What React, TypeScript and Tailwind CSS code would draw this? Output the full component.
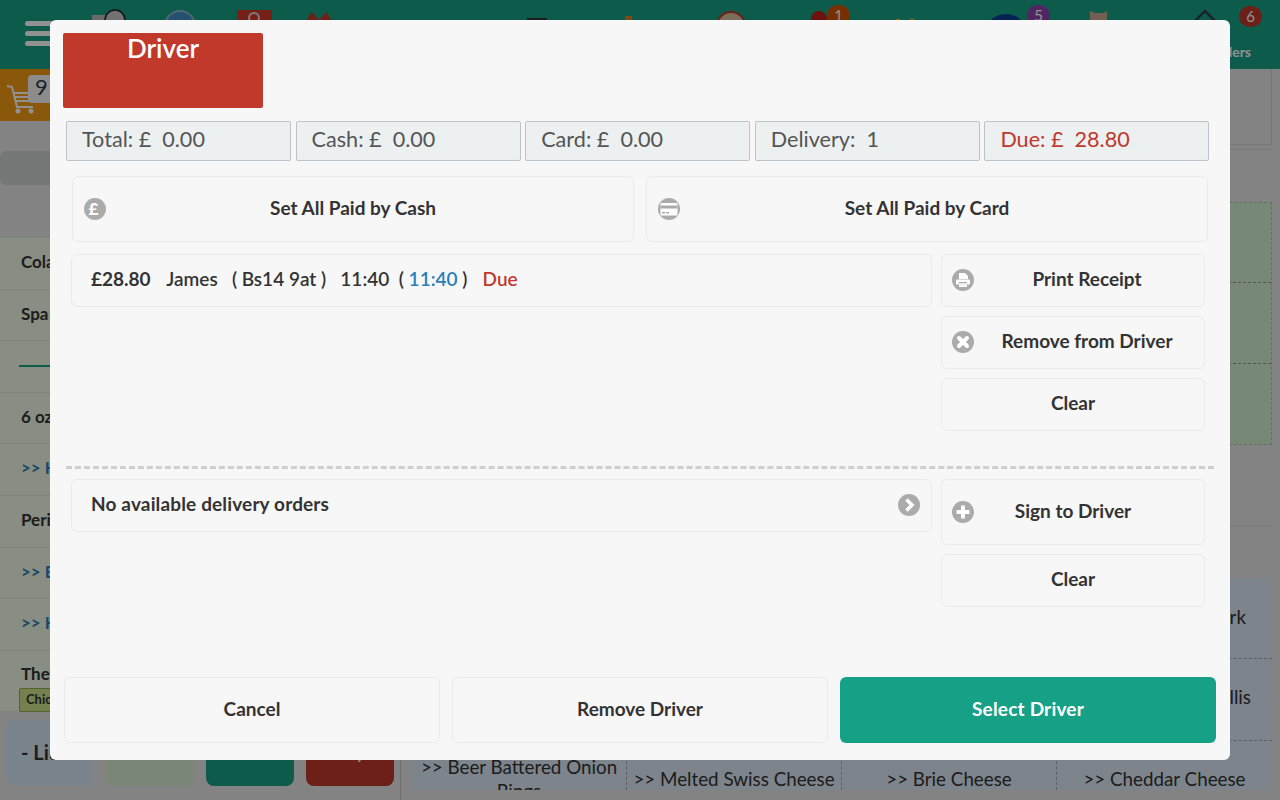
import React from "react";

const IconCircle = ({ children, className }: { children: React.ReactNode; className: string }) => (
  <svg viewBox="0 0 22 22" className={`absolute w-[22px] h-[22px] ${className}`}>
    <circle cx="11" cy="11" r="11" fill="#ababab" />
    {children}
  </svg>
);

const CardIcon = ({ className }: { className: string }) => (
  <IconCircle className={className}>
    <rect x="2.5" y="5" width="17" height="12.5" rx="1" fill="#fff" />
    <rect x="2.5" y="7.5" width="17" height="3" fill="#ababab" />
    <rect x="4" y="14" width="3" height="1.5" fill="#ababab" />
    <rect x="8" y="14" width="3" height="1.5" fill="#ababab" />
  </IconCircle>
);

const PrintIcon = ({ className }: { className: string }) => (
  <IconCircle className={className}>
    <path d="M7 4h6l3 3v3H7z" fill="#fff" />
    <rect x="4" y="10.5" width="14" height="5" rx="1" fill="#fff" />
    <rect x="7" y="13" width="8" height="1.2" fill="#ababab" />
    <rect x="7" y="15.5" width="8" height="2.5" fill="#fff" />
  </IconCircle>
);

const CloseIcon = ({ className }: { className: string }) => (
  <IconCircle className={className}>
    <path d="M7 7l8 8M15 7l-8 8" stroke="#fff" strokeWidth="4" strokeLinecap="round" />
  </IconCircle>
);

const PlusIcon = ({ className }: { className: string }) => (
  <IconCircle className={className}>
    <path d="M11 4.5v13M4.5 11h13" stroke="#fff" strokeWidth="4" />
  </IconCircle>
);

const ChevronIcon = ({ className }: { className: string }) => (
  <IconCircle className={className}>
    <path d="M8.5 5.5l5.5 5.5-5.5 5.5" stroke="#fff" strokeWidth="3.6" fill="none" />
  </IconCircle>
);

const Total = ({ children, red }: { children: React.ReactNode; red?: boolean }) => (
  <div
    className={`w-[225px] h-10 flex items-center pl-[15px] pb-[4px] bg-[#ecf0f1] border border-[#bdc3c7] rounded-[2px] text-[21.6px] whitespace-pre ${
      red ? "text-[#c0392b]" : "text-[#555]"
    }`}
  >
    {children}
  </div>
);

const Btn = ({
  children,
  className,
  icon,
}: {
  children?: React.ReactNode;
  className: string;
  icon?: React.ReactNode;
}) => (
  <div
    className={`relative flex items-center justify-center pb-[2px] border border-[#ebebeb] rounded-[6px] text-[19px] font-bold text-[#333] ${className}`}
  >
    {icon}
    {children}
  </div>
);

const listRows = ["Cola", "Spa", "", "6 oz", ">> H", "Peri", ">> B", ">> K"];

const NavIcons = () => (
  <svg viewBox="0 0 1280 69" className="absolute left-0 top-0 w-[1280px] h-[69px]">
    <rect x="92" y="15" width="14" height="8" fill="#bbb" />
    <circle cx="115" cy="20" r="10" fill="#c8c8c8" stroke="#222" strokeWidth="1.5" />
    <circle cx="180" cy="26" r="15" fill="#3f8fc4" stroke="#8fb8cc" strokeWidth="2" />
    <rect x="237" y="10" width="35" height="20" fill="#d0392b" />
    <circle cx="254" cy="18" r="5" fill="none" stroke="#ddd" strokeWidth="2" />
    <path d="M305 22l7-10 7 8 7-8 7 10v6h-28z" fill="#c0392b" />
    <rect x="527" y="18" width="20" height="6" fill="#333" />
    <rect x="625" y="16" width="7" height="8" fill="#e67e22" />
    <circle cx="731" cy="26" r="14" fill="#d8c4a0" stroke="#c0392b" strokeWidth="2" />
    <circle cx="819" cy="19" r="8" fill="#c0201b" />
    <circle cx="898" cy="21" r="2.5" fill="#e8b00c" />
    <circle cx="912" cy="21" r="2.5" fill="#e8b00c" />
    <ellipse cx="1006" cy="26" rx="17" ry="12" fill="#0a3d91" />
    <path d="M1090 11l5 2h9l3-2v14h-17z" fill="#c9a890" />
    <path d="M1192 24l13-13 13 13" fill="none" stroke="#2c3e50" strokeWidth="2.5" />
  </svg>
);

const Badge = ({ n, className }: { n: string; className: string }) => (
  <div
    className={`absolute w-[23px] h-[21px] rounded-full flex items-center justify-center text-white text-[15px] ${className}`}
  >
    {n}
  </div>
);

export default function App() {
  return (
    <div className="relative w-[1280px] h-[800px] overflow-hidden bg-[#e7e7e7] font-[Lato,sans-serif] text-[#2c3e50]">
      {/* page behind the dialog */}
      <header className="relative h-[69px] bg-[#16a085]">
        <div className="flex flex-col gap-[5px] pt-[21px] pl-[25px]">
          <div className="w-[30px] h-[5px] rounded-full bg-[#fff]" />
          <div className="w-[30px] h-[5px] rounded-full bg-[#fff]" />
          <div className="w-[30px] h-[5px] rounded-full bg-[#fff]" />
        </div>
        <NavIcons />
        <Badge n="1" className="left-[827px] top-[5px] bg-[#d35400]" />
        <Badge n="5" className="left-[1027px] top-[5px] bg-[#8e44ad]" />
        <Badge n="6" className="left-[1239px] top-[6px] bg-[#c0392b]" />
        <div className="absolute right-[29px] top-[41px] text-[14px] font-bold text-white">Orders</div>
      </header>

      <div className="flex h-[731px]">
        <aside className="w-[401px] shrink-0 border-r border-[#c4c4c4]">
          <div className="relative h-[52px] bg-[#f39c12]">
            <svg viewBox="0 0 32 30" className="absolute left-[6px] top-[15px] w-8 h-[30px]" fill="none" stroke="#fff" strokeWidth="2">
              <path d="M1 2l5 1 5 20h16" />
              <path d="M8 9h20M9 13h18M10 17h16" />
              <circle cx="12" cy="27" r="1.5" fill="#fff" />
              <circle cx="25" cy="27" r="1.5" fill="#fff" />
            </svg>
            <div className="absolute left-[28px] top-[6px] w-[30px] h-[28px] rounded-[4px] bg-[#f7f7f7] pl-[7px] text-[22px] leading-[24px]">
              9
            </div>
          </div>
          <div className="h-[30px]" />
          <div className="h-[34px] bg-[#d0d4d4] rounded-l-md" />
          <div className="h-[53px]" />
          {listRows.map((r, i) => (
            <div
              key={i}
              className={`h-[51.6px] flex items-center pl-[21px] pb-[3px] bg-[#f0f9e6] border-b border-[#dfe6d4] text-[17px] font-bold ${
                r.startsWith(">>") ? "text-[#2980b9]" : "text-[#333]"
              }`}
            >
              {r === "" ? <div className="w-full h-[2px] ml-[-2px] mt-[3px] bg-[#16a085]" /> : r}
            </div>
          ))}
          <div className="h-[60px] pl-[21px] pt-[12px] bg-[#f0f9e6] text-[17px] font-bold leading-[22px] text-[#333]">
            The
            <div className="ml-[-2px] mt-[3px] h-[24px] w-[80px] pl-[6px] bg-[#cde28a] border border-[#8fb04a] rounded-[2px] text-[13px] leading-[20px]">
              Chicken
            </div>
          </div>
          <div className="flex gap-3 pl-[6px] pt-[9px]">
            <div className="w-[88px] h-[66px] rounded-[8px] bg-[#d6e9f8] flex items-center pl-[15px] pb-[2px] text-[20px] font-bold text-[#333]">
              - Liu
            </div>
            <div className="w-[88px] h-[66px] rounded-[8px] bg-[#d8edcf]" />
            <div className="w-[88px] h-[66px] rounded-[8px] bg-[#16a085]" />
            <div className="w-[88px] h-[66px] rounded-[8px] bg-[#c0392b] flex items-center justify-center pb-[4px] text-[20px] text-white">
              Pay
            </div>
          </div>
        </aside>

        <main className="flex-1 flex flex-col pl-[11px] pr-2 text-[18.8px] text-[#333]">
          <div className="h-[76px] ml-auto w-[60px] border-r border-b border-[#cfcfcf]" />
          <div className="h-[5px] border-b border-[#d6d6d6]" />
          <div className="h-[52px]" />
          <div className="h-[243px] grid grid-rows-3 border border-dashed border-[#a9c9a9] bg-[#d4efd0]">
            <div className="border-b border-dashed border-[#a08f8f]" />
            <div className="border-b border-dashed border-[#a08f8f]" />
            <div />
          </div>
          <div className="h-[81px] border-b border-[#d6d6d6]" />
          <div className="h-[52px]" />
          <div className="h-[212px] grid grid-cols-4 grid-rows-[81px_82px_49px] bg-[#dde9f6] text-center">
            <div className="border-r border-b border-dashed border-[#a3a9b0]" />
            <div className="border-r border-b border-dashed border-[#a3a9b0]" />
            <div className="border-r border-b border-dashed border-[#a3a9b0]" />
            <div className="flex items-center justify-end pr-[26px] pb-[2px] border-b border-dashed border-[#a3a9b0]">Pork</div>
            <div className="border-r border-b border-dashed border-[#a3a9b0]" />
            <div className="border-r border-b border-dashed border-[#a3a9b0]" />
            <div className="border-r border-b border-dashed border-[#a3a9b0]" />
            <div className="flex items-center justify-end pr-[21px] pb-[4px] border-b border-dashed border-[#a3a9b0]">Wallis</div>
            <div className="border-r border-dashed border-[#a3a9b0] leading-[24px] overflow-hidden pt-[14px]">
              &gt;&gt; Beer Battered Onion Rings
            </div>
            <div className="border-r border-dashed border-[#a3a9b0] pt-[24px] whitespace-nowrap">&gt;&gt; Melted Swiss Cheese</div>
            <div className="border-r border-dashed border-[#a3a9b0] pt-[24px]">&gt;&gt; Brie Cheese</div>
            <div className="pt-[24px]">&gt;&gt; Cheddar Cheese</div>
          </div>
        </main>
      </div>

      <div className="absolute inset-0 bg-black/[.43]" />

      {/* dialog */}
      <div className="absolute left-[50px] top-5 w-[1180px] h-[740px] rounded-[6px] bg-[#f7f7f7] pt-[13px]">
        <div className="ml-[13px] w-[200px] h-[75px] rounded-[2px] bg-[#c0392b] text-center text-white text-[26px] font-semibold leading-[31px]">
          Driver
        </div>

        <div className="ml-4 mt-[13px] flex gap-[4.6px]">
          <Total>Total: £  0.00</Total>
          <Total>Cash: £  0.00</Total>
          <Total>Card: £  0.00</Total>
          <Total>Delivery:  1</Total>
          <Total red>Due: £  28.80</Total>
        </div>

        <div className="ml-[22px] mt-[15px] flex gap-3">
          <Btn
            className="w-[562px] h-[66px]"
            icon={
              <span className="absolute left-[11px] top-[21px] w-[22px] h-[22px] pr-[3px] rounded-full bg-[#ababab] text-white text-[17px] font-black leading-[22px] text-center">
                £
              </span>
            }
          >
            Set All Paid by Cash
          </Btn>
          <Btn className="w-[562px] h-[66px]" icon={<CardIcon className="left-[11px] top-[21px]" />}>
            Set All Paid by Card
          </Btn>
        </div>

        <div className="ml-[21px] mt-3 flex gap-[9px]">
          <div className="w-[861px] h-[53px] flex items-center pl-[19px] pb-[2px] border border-[#ebebeb] rounded-[6px] text-[19px] text-[#333] font-semibold whitespace-pre">
            <b className="font-bold">£28.80</b>
            <span className="ml-[2px]">{"   James   ( Bs14 9at )   11:40  ( "}</span>
            <span className="text-[#2980b9]">11:40</span>
            <span>{" )   "}</span>
            <span className="ml-[1px] text-[#c0392b]">Due</span>
          </div>
          <div className="flex flex-col gap-[9px]">
            <Btn className="w-[264px] h-[53px] pl-7" icon={<PrintIcon className="left-[10px] top-[14px]" />}>
              Print Receipt
            </Btn>
            <Btn className="w-[264px] h-[53px] pl-7" icon={<CloseIcon className="left-[10px] top-[14px]" />}>
              Remove from Driver
            </Btn>
            <Btn className="w-[264px] h-[53px]">Clear</Btn>
          </div>
        </div>

        <div className="ml-4 mr-4 mt-[35px] border-t-[3px] border-dashed border-[#cfcfcf]" />

        <div className="ml-[21px] mt-[10px] flex gap-[9px]">
          <div className="relative w-[861px] h-[53px] flex items-center pl-[19px] pb-[2px] border border-[#ebebeb] rounded-[6px] text-[19px] font-bold tracking-[0.15px] text-[#333]">
            No available delivery orders
            <ChevronIcon className="right-[11px] top-[14px]" />
          </div>
          <div className="flex flex-col gap-[9px]">
            <Btn className="w-[264px] h-[66px]" icon={<PlusIcon className="left-[10px] top-[21px]" />}>
              Sign to Driver
            </Btn>
            <Btn className="w-[264px] h-[53px]">Clear</Btn>
          </div>
        </div>

        <div className="ml-[14px] mt-[70px] flex gap-3">
          <Btn className="w-[376px] h-[66px]">Cancel</Btn>
          <Btn className="w-[376px] h-[66px]">Remove Driver</Btn>
          <div className="w-[376px] h-[66px] flex items-center justify-center pb-[2px] rounded-[6px] bg-[#16a085] text-white text-[19px] font-bold tracking-[0.2px]">
            Select Driver
          </div>
        </div>
      </div>
    </div>
  );
}
